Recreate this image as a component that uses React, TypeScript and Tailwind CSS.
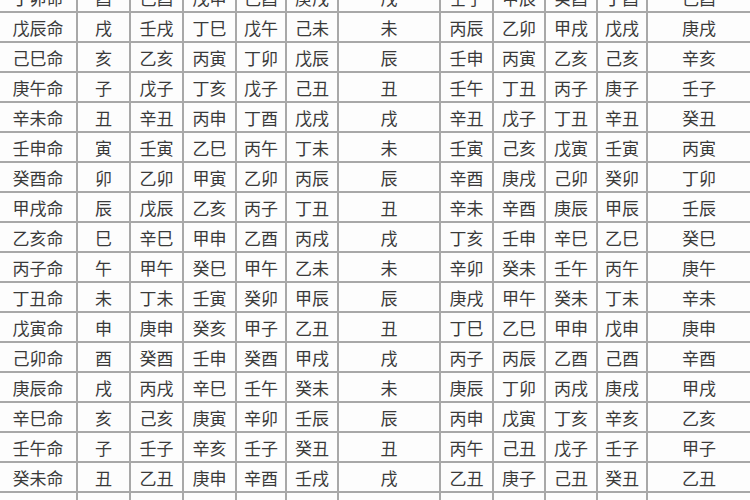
import React from "react";

const rows: string[][] = [
  ["丁卯命", "酉", "己酉", "戊申", "己酉", "庚戌", "戌", "壬子", "甲辰", "癸酉", "丁酉", "己酉"],
  ["戊辰命", "戌", "壬戌", "丁巳", "戊午", "己未", "未", "丙辰", "乙卯", "甲戌", "戊戌", "庚戌"],
  ["己巳命", "亥", "乙亥", "丙寅", "丁卯", "戊辰", "辰", "壬申", "丙寅", "乙亥", "己亥", "辛亥"],
  ["庚午命", "子", "戊子", "丁亥", "戊子", "己丑", "丑", "壬午", "丁丑", "丙子", "庚子", "壬子"],
  ["辛未命", "丑", "辛丑", "丙申", "丁酉", "戊戌", "戌", "辛丑", "戊子", "丁丑", "辛丑", "癸丑"],
  ["壬申命", "寅", "壬寅", "乙巳", "丙午", "丁未", "未", "壬寅", "己亥", "戊寅", "壬寅", "丙寅"],
  ["癸酉命", "卯", "乙卯", "甲寅", "乙卯", "丙辰", "辰", "辛酉", "庚戌", "己卯", "癸卯", "丁卯"],
  ["甲戌命", "辰", "戊辰", "乙亥", "丙子", "丁丑", "丑", "辛未", "辛酉", "庚辰", "甲辰", "壬辰"],
  ["乙亥命", "巳", "辛巳", "甲申", "乙酉", "丙戌", "戌", "丁亥", "壬申", "辛巳", "乙巳", "癸巳"],
  ["丙子命", "午", "甲午", "癸巳", "甲午", "乙未", "未", "辛卯", "癸未", "壬午", "丙午", "庚午"],
  ["丁丑命", "未", "丁未", "壬寅", "癸卯", "甲辰", "辰", "庚戌", "甲午", "癸未", "丁未", "辛未"],
  ["戊寅命", "申", "庚申", "癸亥", "甲子", "乙丑", "丑", "丁巳", "乙巳", "甲申", "戊申", "庚申"],
  ["己卯命", "酉", "癸酉", "壬申", "癸酉", "甲戌", "戌", "丙子", "丙辰", "乙酉", "己酉", "辛酉"],
  ["庚辰命", "戌", "丙戌", "辛巳", "壬午", "癸未", "未", "庚辰", "丁卯", "丙戌", "庚戌", "甲戌"],
  ["辛巳命", "亥", "己亥", "庚寅", "辛卯", "壬辰", "辰", "丙申", "戊寅", "丁亥", "辛亥", "乙亥"],
  ["壬午命", "子", "壬子", "辛亥", "壬子", "癸丑", "丑", "丙午", "己丑", "戊子", "壬子", "甲子"],
  ["癸未命", "丑", "乙丑", "庚申", "辛酉", "壬戌", "戌", "乙丑", "庚子", "己丑", "癸丑", "乙丑"],
  ["甲申命", "寅", "丙寅", "己亥", "庚子", "辛丑", "丑", "甲申", "辛丑", "庚寅", "甲寅", "丙寅"],
];

export default function App() {
  return (
    <div className="w-[750px] h-[500px] overflow-hidden bg-white">
      <div
        className="-mt-[17px] grid grid-cols-[76px_51px_51px_51px_48px_50px_100px_51px_50px_50px_48px_102px] auto-rows-[28px] gap-[2px] bg-[#a8a8a8] text-[17px] text-[#3a3a3a]"
        style={{ fontFamily: '"Noto Sans CJK SC", "Noto Sans CJK TC", sans-serif' }}
      >
        {rows.map((r, i) =>
          r.map((c, j) => (
            <div
              key={`${i}-${j}`}
              className="bg-[#fdfdfd] flex items-center justify-center leading-none"
            >
              {c}
            </div>
          ))
        )}
      </div>
    </div>
  );
}
